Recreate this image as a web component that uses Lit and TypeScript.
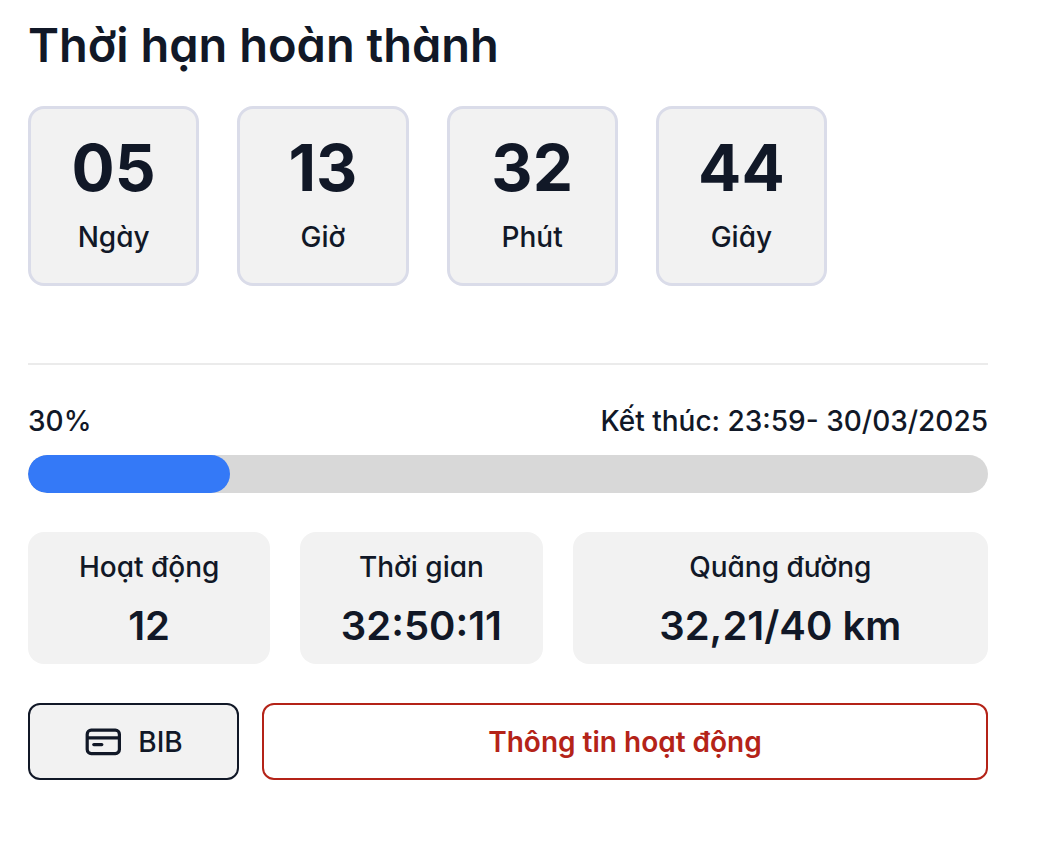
import { LitElement, html, css } from "lit";
import { customElement, state } from "lit/decorators.js";

interface Unit {
  value: string;
  label: string;
}

@customElement("app-root")
export class AppRoot extends LitElement {
  static styles = css`
    :host {
      display: block;
      min-height: 100vh;
      box-sizing: border-box;
      padding: 16px 62px 32px 28px;
      background: #fff;
      color: #111827;
      font-family: Inter, "Noto Sans", sans-serif;
      font-feature-settings: "cv11";
      font-size: 28px;
      line-height: 36px;
    }
    * {
      box-sizing: border-box;
    }
    .title {
      margin: 0;
      font-size: 47px;
      line-height: 58px;
      font-weight: 600;
    }
    .countdown {
      display: grid;
      grid-template-columns: repeat(4, 1fr);
      gap: 38px;
      max-width: 799px;
      margin-top: 32px;
    }
    .unit {
      display: flex;
      flex-direction: column;
      align-items: center;
      gap: 15px;
      padding: 23px 8px 28px;
      border: 3px solid #dadce9;
      border-radius: 16px;
      background: #f2f2f2;
    }
    .unit-value {
      font-size: 64px;
      line-height: 72px;
      font-weight: 700;
    }
    .unit-label {
      font-weight: 500;
    }
    .divider {
      height: 2px;
      margin: 77px 0 0;
      border: 0;
      background: #ebebeb;
    }
    .progress-head {
      display: flex;
      justify-content: space-between;
      margin-top: 38px;
      font-weight: 500;
    }
    .track {
      height: 38px;
      margin-top: 16px;
      border-radius: 19px;
      background: #d8d8d8;
      overflow: hidden;
    }
    .fill {
      height: 100%;
      border-radius: 19px;
      background: #3479f7;
    }
    .stats {
      display: grid;
      grid-template-columns: 242fr 242fr 415fr;
      gap: 30px;
      margin-top: 39px;
    }
    .stat {
      display: flex;
      flex-direction: column;
      align-items: center;
      gap: 17px;
      padding: 17px 8px 14px;
      border-radius: 16px;
      background: #f2f2f2;
    }
    .stat-label {
      font-weight: 500;
    }
    .stat-value {
      font-size: 40px;
      line-height: 48px;
      font-weight: 600;
    }
    .actions {
      display: grid;
      grid-template-columns: 211fr 726fr;
      gap: 23px;
      margin-top: 39px;
    }
    .button {
      display: flex;
      align-items: center;
      justify-content: center;
      gap: 16px;
      padding: 19px 16px 18px;
      border: 2px solid #111827;
      border-radius: 12px;
      background: #f2f2f2;
      color: inherit;
      font: inherit;
      font-feature-settings: inherit;
      font-weight: 500;
      cursor: pointer;
    }
    .button-danger {
      border-color: #b42318;
      background: #fff;
      color: #b42318;
      font-weight: 600;
    }
    .icon {
      width: 38px;
      height: 28px;
    }
  `;

  @state() private units: Unit[] = [
    { value: "05", label: "Ngày" },
    { value: "13", label: "Giờ" },
    { value: "32", label: "Phút" },
    { value: "44", label: "Giây" },
  ];

  @state() private stats: Unit[] = [
    { value: "12", label: "Hoạt động" },
    { value: "32:50:11", label: "Thời gian" },
    { value: "32,21/40 km", label: "Quãng đường" },
  ];

  @state() private fillWidth = 21;

  render() {
    return html`
      <h1 class="title">Thời hạn hoàn thành</h1>
      <section class="countdown">
        ${this.units.map(
          (u) => html`<div class="unit">
            <span class="unit-value">${u.value}</span>
            <span class="unit-label">${u.label}</span>
          </div>`
        )}
      </section>
      <hr class="divider" />
      <div class="progress-head">
        <span>30%</span>
        <span>Kết thúc: 23:59- 30/03/2025</span>
      </div>
      <div class="track" role="progressbar" aria-label="30%" aria-valuemin="0" aria-valuemax="100" aria-valuenow="30">
        <div class="fill" style="width: ${this.fillWidth}%"></div>
      </div>
      <section class="stats">
        ${this.stats.map(
          (s) => html`<div class="stat">
            <span class="stat-label">${s.label}</span>
            <span class="stat-value">${s.value}</span>
          </div>`
        )}
      </section>
      <div class="actions">
        <button class="button" type="button">
          <svg class="icon" viewBox="0 0 38 28" fill="none" stroke="currentColor" stroke-width="3.2" stroke-linecap="round" aria-hidden="true">
            <rect x="3.2" y="2.2" width="32.2" height="23.4" rx="4" />
            <path d="M3.2 9.8H35.4" stroke-linecap="butt" />
            <path d="M9.8 16.6H17.8" />
          </svg>
          <span>BIB</span>
        </button>
        <button class="button button-danger" type="button">Thông tin hoạt động</button>
      </div>
    `;
  }
}
